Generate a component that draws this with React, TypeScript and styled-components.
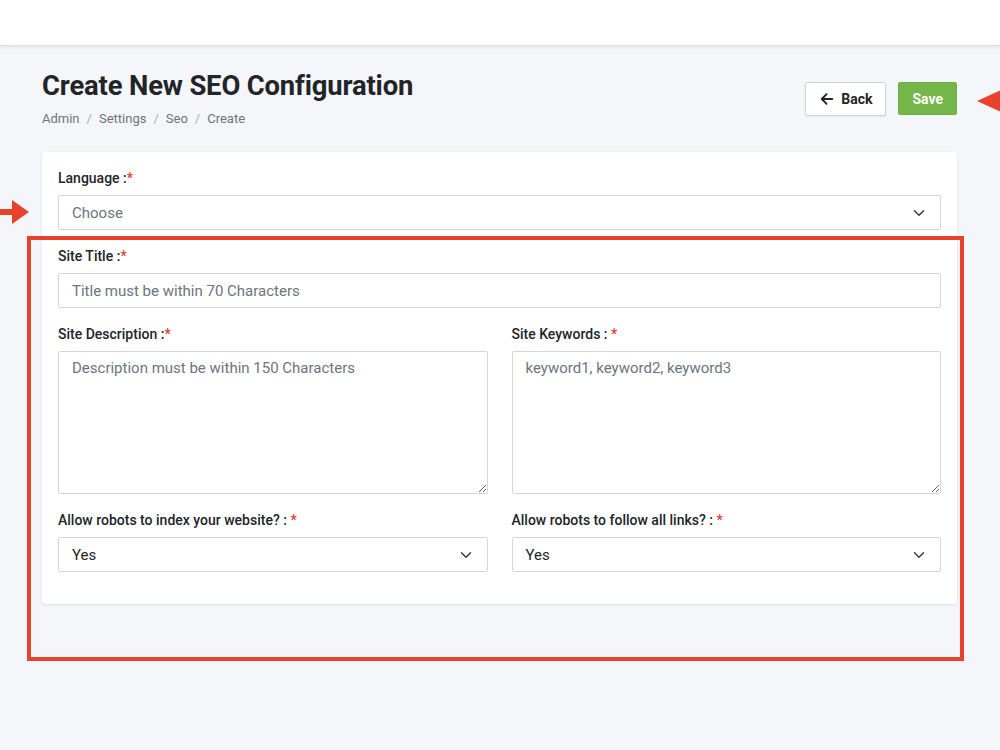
import React from 'react';
import styled, { createGlobalStyle } from 'styled-components';

const GlobalStyle = createGlobalStyle`
  * { box-sizing: border-box; }
  body {
    margin: 0;
    font-family: Roboto, 'Liberation Sans', sans-serif;
    background-color: #f5f6fa;
    color: #212529;
  }
`;

const ChevronDown = () => (
  <svg width='12' height='12' viewBox='0 0 16 16' fill='none'>
    <path d='M2 5l6 6 6-6' stroke='#343a40' strokeWidth='1.9' strokeLinecap='round' strokeLinejoin='round' />
  </svg>
);

const ArrowLeft = () => (
  <svg width='14' height='14' viewBox='0 0 16 16' fill='none'>
    <path d='M14 8H2.5M7.5 2.5L2 8l5.5 5.5' stroke='#212529' strokeWidth='2.2' strokeLinecap='round' strokeLinejoin='round' />
  </svg>
);

function Field({ label, children }: { label: string; children: React.ReactNode }) {
  return (
    <Group>
      <Label>
        {label}
        <Required>*</Required>
      </Label>
      {children}
    </Group>
  );
}

function Select({ value, muted }: { value: string; muted?: boolean }) {
  return (
    <SelectBox>
      <SelectValue $muted={muted}>{value}</SelectValue>
      <ChevronDown />
    </SelectBox>
  );
}

export default function App() {
  return (
    <Page>
      <GlobalStyle />
      <TopBar />
      <Content>
        <HeaderRow>
          <div>
            <Title>Create New SEO Configuration</Title>
            <Breadcrumb>
              <span>Admin</span>
              <Sep>/</Sep>
              <span>Settings</span>
              <Sep>/</Sep>
              <span>Seo</span>
              <Sep>/</Sep>
              <span>Create</span>
            </Breadcrumb>
          </div>
          <Actions>
            <BackButton>
              <ArrowLeft />
              Back
            </BackButton>
            <SaveButton>Save</SaveButton>
          </Actions>
        </HeaderRow>

        <Card>
          <Field label='Language :'>
            <Select value='Choose' muted />
          </Field>
          <Field label='Site Title :'>
            <Input placeholder='Title must be within 70 Characters' />
          </Field>
          <Row>
            <Field label='Site Description :'>
              <TextArea placeholder='Description must be within 150 Characters' />
            </Field>
            <Field label='Site Keywords : '>
              <TextArea placeholder='keyword1, keyword2, keyword3' />
            </Field>
          </Row>
          <Row>
            <Field label='Allow robots to index your website? : '>
              <Select value='Yes' />
            </Field>
            <Field label='Allow robots to follow all links? : '>
              <Select value='Yes' />
            </Field>
          </Row>
        </Card>
      </Content>

      <Highlight />
      <PointerLeft>
        <svg width='30' height='26' viewBox='0 0 30 26'>
          <path d='M0 10h12V1l17 12-17 12v-9H0z' fill='#e8412c' />
        </svg>
      </PointerLeft>
      <PointerRight>
        <svg width='24' height='26' viewBox='0 0 24 26'>
          <path d='M0 13L24 2v22z' fill='#e8412c' />
        </svg>
      </PointerRight>
    </Page>
  );
}

const Page = styled.div`
  position: relative;
  width: 1000px;
  height: 750px;
  overflow: hidden;
  background-color: #f5f6fa;
`;

const TopBar = styled.div`
  height: 46px;
  background-color: #ffffff;
  border-bottom: 1px solid #dcdde2;
  box-shadow: 0 2px 3px rgba(0, 0, 0, 0.06);
`;

const Content = styled.div`
  padding: 24px 43px 0 42px;
`;

const HeaderRow = styled.div`
  display: flex;
  justify-content: space-between;
  align-items: flex-start;
`;

const Title = styled.h1`
  margin: 0;
  font-size: 27.4px;
  font-weight: 700;
  line-height: 32px;
  color: #212529;
  letter-spacing: -0.15px;
`;

const Breadcrumb = styled.div`
  margin-top: 9px;
  font-size: 13px;
  color: #6c757d;
  display: flex;
  align-items: center;
`;

const Sep = styled.span`
  color: #a9afb6;
  margin: 0 7px;
`;

const Actions = styled.div`
  display: flex;
  gap: 12px;
  margin-top: 12px;
`;

const BackButton = styled.button`
  display: flex;
  align-items: center;
  gap: 7px;
  height: 34px;
  padding: 0 13px 0 14px;
  background-color: #ffffff;
  border: 1px solid #cfd3d8;
  border-radius: 2px;
  font-family: Roboto, 'Liberation Sans', sans-serif;
  font-size: 14px;
  font-weight: 700;
  color: #212529;
  box-shadow: 0 1px 2px rgba(0, 0, 0, 0.08);
`;

const SaveButton = styled.button`
  height: 33px;
  padding: 0 13px;
  background-color: #74b64a;
  border: 1px solid #6fb045;
  border-radius: 2px;
  font-family: Roboto, 'Liberation Sans', sans-serif;
  font-size: 14px;
  font-weight: 700;
  color: #ffffff;
`;

const Card = styled.div`
  margin-top: 26px;
  background-color: #ffffff;
  border-radius: 4px;
  box-shadow: 0 1px 3px rgba(0, 0, 0, 0.1);
  padding: 16px 16px 16px;
`;

const Group = styled.div`
  display: flex;
  flex-direction: column;
  margin-bottom: 16px;
  flex: 1;
  min-width: 0;
`;

const Row = styled.div`
  display: flex;
  gap: 24px;
`;

const Label = styled.label`
  font-size: 14px;
  font-weight: 500;
  line-height: 20px;
  color: #212529;
  margin-bottom: 7px;
`;

const Required = styled.span`
  color: #e53a2a;
`;

const controlBase = `
  width: 100%;
  border: 1px solid #d3d7dc;
  border-radius: 2px;
  background-color: #ffffff;
  font-family: Roboto, 'Liberation Sans', sans-serif;
  font-size: 15px;
  color: #212529;
  outline: none;
  &::placeholder {
    color: #6c757d;
  }
`;

const Input = styled.input`
  ${controlBase}
  height: 35px;
  padding: 0 13px;
`;

const TextArea = styled.textarea`
  ${controlBase}
  height: 143px;
  padding: 7px 13px;
  resize: vertical;
  display: block;
`;

const SelectBox = styled.div`
  ${controlBase}
  height: 35px;
  padding: 0 15px 0 13px;
  display: flex;
  align-items: center;
  justify-content: space-between;
`;

const SelectValue = styled.span<{ $muted?: boolean }>`
  color: ${(p) => (p.$muted ? '#6c757d' : '#212529')};
`;

const Highlight = styled.div`
  position: absolute;
  left: 27px;
  top: 236px;
  width: 937px;
  height: 425px;
  border: 4px solid #e8412c;
  pointer-events: none;
`;

const PointerLeft = styled.div`
  position: absolute;
  left: 0;
  top: 199px;
  line-height: 0;
`;

const PointerRight = styled.div`
  position: absolute;
  left: 977px;
  top: 88px;
  line-height: 0;
`;
